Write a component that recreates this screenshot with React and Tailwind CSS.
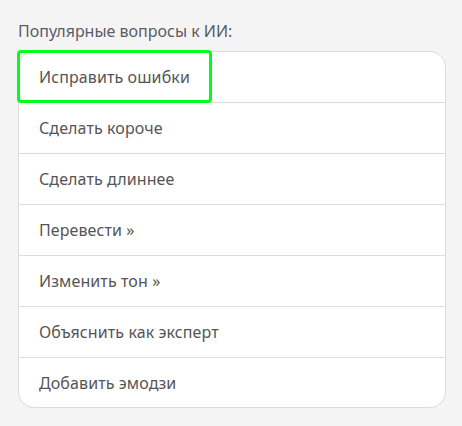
const prompts = [
  "Исправить ошибки",
  "Сделать короче",
  "Сделать длиннее",
  "Перевести »",
  "Изменить тон »",
  "Объяснить как эксперт",
  "Добавить эмодзи",
];

export default function App() {
  return (
    <div
      className="min-h-[426px] w-[462px] bg-[#f4f4f4] pl-[18px] pt-[19px] text-[16px] text-[#555555]"
      style={{ fontFamily: '"Noto Sans", "Open Sans", sans-serif' }}
    >
      <div className="mb-[8px] leading-6 text-[#5c5c66]">Популярные вопросы к ИИ:</div>
      <div className="w-[428px] rounded-2xl border border-[#dcdcdc] bg-white">
        {prompts.map((p, i) => (
          <div
            key={p}
            className="relative flex h-[51px] items-center border-b border-[#dcdcdc] px-5 last:h-[49px] last:border-b-0"
          >
            {i === 0 && (
              // focus ring of the first item
              <span className="absolute -left-[2px] -top-[2px] h-[53px] w-[195px] rounded-[4px] border-[3px] border-[#00ff1a]" />
            )}
            <span className="tracking-[0.1px]">{p}</span>
          </div>
        ))}
      </div>
    </div>
  );
}
